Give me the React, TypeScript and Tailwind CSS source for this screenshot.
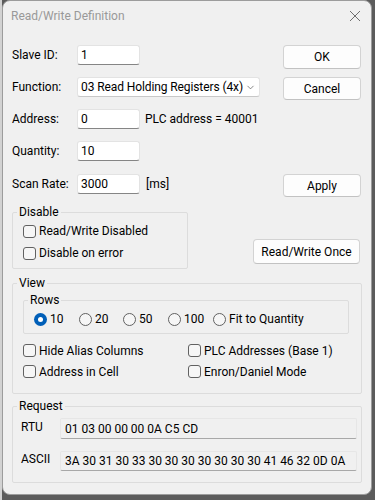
import { ChevronDown } from "lucide-react";

function Field({ value, className }: { value: string; className: string }) {
  return (
    <div
      className={
        "h-[20px] flex items-center pl-[3px] bg-white rounded-[3px] border border-[#e3e3e3] border-b-[#858585] " +
        className
      }
    >
      {value}
    </div>
  );
}

function Btn({ label, className }: { label: string; className: string }) {
  return (
    <button
      type="button"
      className={
        "flex items-center justify-center bg-[#fdfdfd] rounded-[4px] border border-[#d3d3d3] border-b-[#c2c2c2] " +
        className
      }
    >
      {label}
    </button>
  );
}

function Check({ label }: { label: string }) {
  return (
    <div className="flex items-center gap-[3px]">
      <span className="w-[13px] h-[13px] rounded-[3px] border border-[#616161] bg-[#f6f6f6]" />
      <span>{label}</span>
    </div>
  );
}

function Radio({ label, on, className }: { label: string; on?: boolean; className: string }) {
  return (
    <div className={"flex items-center gap-[3px] " + className}>
      {on ? (
        <span className="w-[13px] h-[13px] rounded-full bg-[#005fb8] flex items-center justify-center">
          <span className="w-[5px] h-[5px] rounded-full bg-white" />
        </span>
      ) : (
        <span className="w-[13px] h-[13px] rounded-full border border-[#616161] bg-[#f6f6f6]" />
      )}
      <span>{label}</span>
    </div>
  );
}

export default function App() {
  return (
    <div className="w-[375px] h-[500px] flex bg-[#5c5c5c] font-['Segoe_UI',Roboto,sans-serif] text-[12px] leading-[16px] text-black">
      <div className="w-[2px] h-full bg-[#d2d2d2]" />
      {/* Dialog */}
      <div className="w-[370px] h-[495px] flex flex-col bg-[#f0f0f0] rounded-[8px] border border-[#9c9c9c] overflow-hidden">
        {/* Title bar */}
        <div className="h-[30px] flex items-center justify-between pl-[8px] pr-[9px] text-[#999999]">
          <span>Read/Write Definition</span>
          <svg width="12" height="12" viewBox="0 0 12 12" className="mr-[1px]">
            <path d="M1 1 L11 11 M11 1 L1 11" stroke="#6f6f6f" strokeWidth="1" fill="none" />
          </svg>
        </div>

        <div className="flex flex-col px-[9px]">
          {/* Top fields + buttons */}
          <div className="flex justify-between items-start pt-[14px]">
            <div className="flex flex-col gap-[12px]">
              <div className="flex items-center h-[20px]">
                <span className="w-[65px]">Slave ID:</span>
                <Field value="1" className="w-[63px]" />
              </div>
              <div className="flex items-center h-[20px]">
                <span className="w-[65px]">Function:</span>
                <div className="w-[183px] h-[20px] flex items-center justify-between pl-[3px] pr-[3px] whitespace-nowrap tracking-[-0.1px] bg-white rounded-[3px] border border-[#e3e3e3] border-b-[#c8c8c8]">
                  <span>03 Read Holding Registers (4x)</span>
                  <ChevronDown size={11} strokeWidth={1.5} color="#555" />
                </div>
              </div>
              <div className="flex items-center h-[20px]">
                <span className="w-[65px]">Address:</span>
                <Field value="0" className="w-[63px]" />
                <span className="ml-[5px]">PLC address = 40001</span>
              </div>
              <div className="flex items-center h-[20px]">
                <span className="w-[65px]">Quantity:</span>
                <Field value="10" className="w-[63px]" />
              </div>
              <div className="flex items-center h-[20px] mt-[1px]">
                <span className="w-[65px]">Scan Rate:</span>
                <Field value="3000" className="w-[63px]" />
                <span className="ml-[6px]">[ms]</span>
              </div>
            </div>
            <div className="flex flex-col w-[78px] mr-[1px]">
              <Btn label="OK" className="w-[78px] h-[24px]" />
              <Btn label="Cancel" className="w-[78px] h-[23px] mt-[8px]" />
              <Btn label="Apply" className="w-[78px] h-[23px] mt-[74px]" />
            </div>
          </div>

          {/* Disable */}
          <div className="flex justify-between items-start mt-[7px]">
            <fieldset className="w-[176px] border border-[#dcdcdc] rounded-[2px] px-[10px] pb-[4px]">
              <legend className="ml-[-6px] px-[2px]">Disable</legend>
              <div className="h-[22px] flex items-center">
                <Check label="Read/Write Disabled" />
              </div>
              <div className="h-[22px] flex items-center">
                <Check label="Disable on error" />
              </div>
            </fieldset>
            <Btn label="Read/Write Once" className="w-[107px] h-[25px] mt-[35px] mr-[2px]" />
          </div>

          {/* View */}
          <fieldset className="mt-[6px] border border-[#dcdcdc] rounded-[2px] px-[10px] pb-[11px]">
            <legend className="ml-[-6px] px-[2px]">View</legend>
            <fieldset className="mt-[1px] w-[326px] border border-[#dcdcdc] rounded-[2px] px-[10px] pb-[4px]">
              <legend className="ml-[-6px] px-[2px]">Rows</legend>
              <div className="h-[20px] mt-[1px] flex items-center">
                <Radio label="10" on className="w-[45px]" />
                <Radio label="20" className="w-[44px]" />
                <Radio label="50" className="w-[45px]" />
                <Radio label="100" className="w-[45px]" />
                <Radio label="Fit to Quantity" className="" />
              </div>
            </fieldset>
            <div className="grid grid-cols-[165px_1fr] mt-[6px]">
              <div className="h-[21px] flex items-center">
                <Check label="Hide Alias Columns" />
              </div>
              <div className="h-[21px] flex items-center">
                <Check label="PLC Addresses (Base 1)" />
              </div>
              <div className="h-[21px] flex items-center">
                <Check label="Address in Cell" />
              </div>
              <div className="h-[21px] flex items-center">
                <Check label="Enron/Daniel Mode" />
              </div>
            </div>
          </fieldset>

          {/* Request */}
          <fieldset className="mt-[4px] border border-[#dcdcdc] rounded-[2px] pl-[8px] pr-[4px] pb-[11px]">
            <legend className="ml-[-4px] px-[2px]">Request</legend>
            <div className="flex items-start mt-[4px]">
              <span className="w-[39px] mt-[1px]">RTU</span>
              <div className="w-[297px] h-[21px] flex items-center pl-[4px] bg-[#f0f0f0] rounded-[2px] border border-[#e6e6e6] border-b-[#a8a8a8]">
                01 03 00 00 00 0A C5 CD
              </div>
            </div>
            <div className="flex items-start mt-[12px]">
              <span className="w-[39px]">ASCII</span>
              <div className="w-[297px] h-[20px] flex items-center pl-[4px] bg-[#f0f0f0] rounded-[2px] border border-[#e6e6e6] border-b-[#a8a8a8]">
                3A 30 31 30 33 30 30 30 30 30 30 30 41 46 32 0D 0A
              </div>
            </div>
          </fieldset>
        </div>
      </div>
    </div>
  );
}
